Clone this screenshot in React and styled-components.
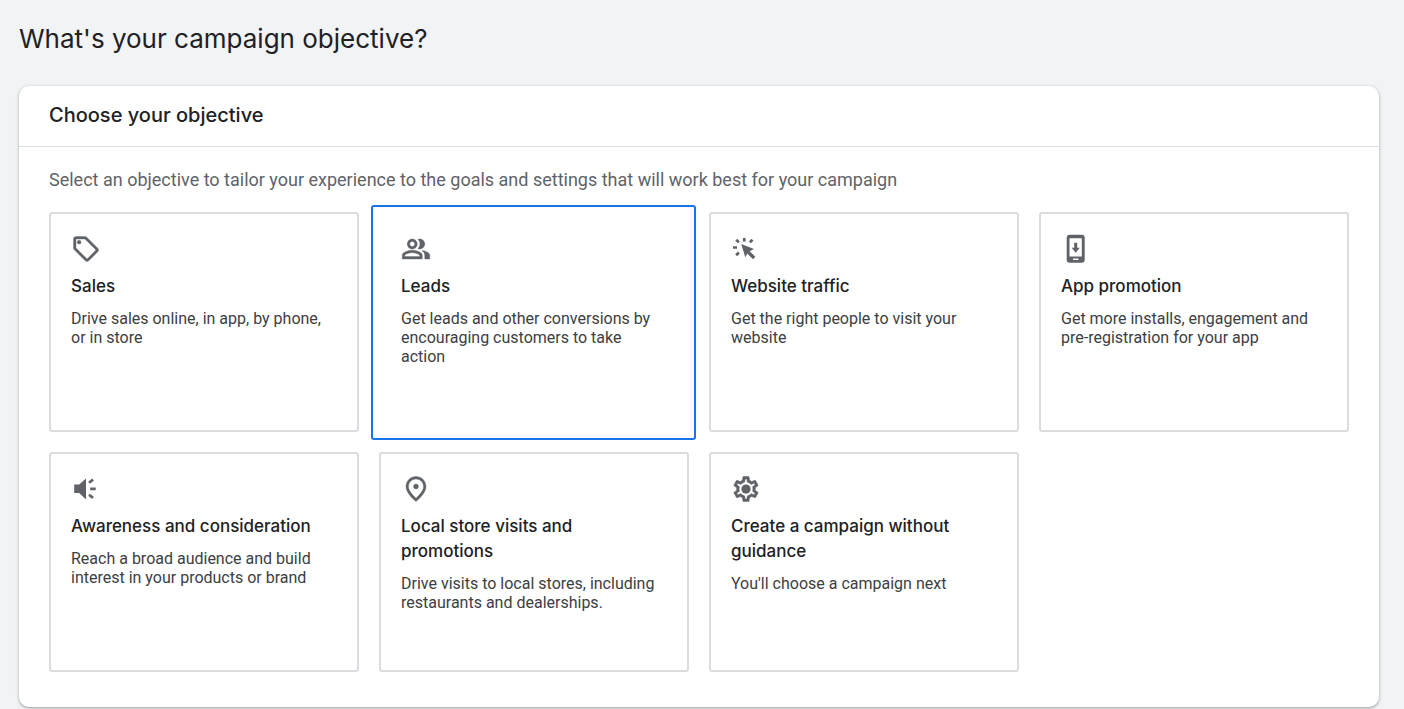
import React, { useState } from 'react'
import styled, { createGlobalStyle } from 'styled-components'
import { MdOutlineSell, MdOutlinePeopleAlt, MdOutlinePlace } from 'react-icons/md'

const GlobalStyle = createGlobalStyle`
  * {
    box-sizing: border-box;
  }

  body {
    margin: 0;
    background: #f1f3f4;
    color: #202124;
    font-family: Roboto, 'Liberation Sans', sans-serif;
  }
`

const displayFont = "'Google Sans', 'Product Sans', Inter, 'Open Sans', sans-serif"

const Page = styled.main`
  padding: 21px 25px 2px 19px;
`

const PageTitle = styled.h1`
  margin: 0 0 29px;
  font-family: ${displayFont};
  font-size: 26px;
  font-weight: 400;
  line-height: 36px;
`

const Panel = styled.section`
  background: #fff;
  border-radius: 10px;
  box-shadow: 0 1px 2px rgba(60, 64, 67, 0.3), 0 1px 3px 1px rgba(60, 64, 67, 0.15);
`

const PanelHeader = styled.header`
  padding: 14px 30px 16px;
  border-bottom: 1px solid #dadce0;
`

const PanelTitle = styled.h2`
  margin: 0;
  font-family: ${displayFont};
  font-size: 20px;
  font-weight: 500;
  line-height: 30px;
`

const PanelBody = styled.div`
  padding: 20px 30px 35px;
`

const Hint = styled.p`
  margin: 0 0 20px;
  color: #5f6368;
  font-size: 18px;
  line-height: 25px;
`

const Grid = styled.div`
  display: grid;
  grid-template-columns: repeat(4, minmax(0, 1fr));
  grid-auto-rows: minmax(220px, auto);
  gap: 20px;
`

const Card = styled.button`
  display: flex;
  flex-direction: column;
  align-items: flex-start;
  margin: ${props => (props.$selected ? '-7px -7px -8px -8px' : '0')};
  padding: ${props => (props.$selected ? '27px 27px 28px 28px' : '20px')};
  background: #fff;
  border: 2px solid ${props => (props.$selected ? '#1a73e8' : '#dadce0')};
  border-radius: 3px;
  color: inherit;
  font-family: inherit;
  text-align: left;
  cursor: pointer;
`

const IconBox = styled.span`
  display: flex;
  margin-bottom: 10px;
  color: #5f6368;

  svg {
    width: 30px;
    height: 30px;
    stroke-width: 0.3;
  }

  /* the material icons carry an empty bounding path */
  [fill='none']:not([stroke]) {
    stroke: none;
  }
`

const CardTitle = styled.span`
  margin-bottom: 10px;
  font-family: ${displayFont};
  font-size: 17px;
  font-weight: 500;
  line-height: 25px;
`

const CardText = styled.span`
  color: #3c4043;
  font-size: 16px;
  line-height: 19px;
`

const TrafficIcon = () => (
  <svg viewBox="0 0 30 30" fill="currentColor" aria-hidden="true">
    <path d="M10.2 10 23 15l-4.3 2.2 5.7 5.6-2.4 2.4-5.7-5.7-2 3.7z" />
    <path
      d="M13.3 4v3.5M5.2 5.7l2.7 2.7M21.5 5.7l-2.7 2.7M2 13.5h4M5.2 21.2l2.7-2.7"
      fill="none"
      stroke="currentColor"
      strokeWidth="2.7"
    />
  </svg>
)

const AppIcon = () => (
  <svg viewBox="0 0 30 30" fill="currentColor" aria-hidden="true">
    <path
      fillRule="evenodd"
      d="M8.7.7h12a3 3 0 0 1 3 3v22a3 3 0 0 1-3 3h-12a3 3 0 0 1-3-3v-22a3 3 0 0 1 3-3zM8.5 4.3v18.3h12.3V4.3zM12 24.6v1.5h5.4v-1.5z"
    />
    <path d="M13.2 8.7h3v5h2.5l-4 5-4-5h2.5z" />
  </svg>
)

const AwarenessIcon = () => (
  <svg viewBox="0 0 30 30" fill="currentColor" aria-hidden="true">
    <path d="M3.2 10.5h5L15 4.5v21L8.2 19h-5z" />
    <path
      d="M19.2 14.8h5.5M18 8.8l4-3.2M18 20.7l4 3.2"
      fill="none"
      stroke="currentColor"
      strokeWidth="2.7"
    />
  </svg>
)

const GearIcon = () => (
  <svg viewBox="0 0 24 24" fill="currentColor" aria-hidden="true">
    <path
      stroke="currentColor"
      strokeWidth="0.4"
      d="M19.43 12.98c.04-.32.07-.64.07-.98 0-.34-.03-.66-.07-.98l2.11-1.65c.19-.15.24-.42.12-.64l-2-3.46c-.09-.16-.26-.25-.44-.25-.06 0-.12.01-.17.03l-2.49 1c-.52-.4-1.08-.73-1.69-.98l-.38-2.65C14.46 2.18 14.25 2 14 2h-4c-.25 0-.46.18-.49.42l-.38 2.65c-.61.25-1.17.59-1.69.98l-2.49-1c-.06-.02-.12-.03-.18-.03-.17 0-.34.09-.43.25l-2 3.46c-.13.22-.07.49.12.64l2.11 1.65c-.04.32-.07.65-.07.98 0 .33.03.66.07.98l-2.11 1.65c-.19.15-.24.42-.12.64l2 3.46c.09.16.26.25.44.25.06 0 .12-.01.17-.03l2.49-1c.52.4 1.08.73 1.69.98l.38 2.65c.03.24.24.42.49.42h4c.25 0 .46-.18.49-.42l.38-2.65c.61-.25 1.17-.59 1.69-.98l2.49 1c.06.02.12.03.18.03.17 0 .34-.09.43-.25l2-3.46c.12-.22.07-.49-.12-.64l-2.11-1.65zm-1.98-1.71c.04.31.05.52.05.73 0 .21-.02.43-.05.73l-.14 1.13.89.7 1.08.84-.7 1.21-1.27-.51-1.04-.42-.9.68c-.43.32-.84.56-1.25.73l-1.06.43-.16 1.13-.2 1.35h-1.4l-.19-1.35-.16-1.13-1.06-.43c-.43-.18-.83-.41-1.23-.71l-.91-.7-1.06.43-1.27.51-.7-1.21 1.08-.84.89-.7-.14-1.13c-.03-.31-.05-.54-.05-.74s.02-.43.05-.73l.14-1.13-.89-.7-1.08-.84.7-1.21 1.27.51 1.04.42.9-.68c.43-.32.84-.56 1.25-.73l1.06-.43.16-1.13.2-1.35h1.39l.19 1.35.16 1.13 1.06.43c.43.18.83.41 1.23.71l.91.7 1.06-.43 1.27-.51.7 1.21-1.07.85-.89.7.14 1.13z"
    />
    <circle cx="12" cy="12" r="3.7" />
  </svg>
)

const objectives = [
  {
    id: 'sales',
    icon: MdOutlineSell,
    title: 'Sales',
    text: 'Drive sales online, in app, by phone, or in store',
  },
  {
    id: 'leads',
    icon: MdOutlinePeopleAlt,
    title: 'Leads',
    text: 'Get leads and other conversions by encouraging customers to take action',
  },
  {
    id: 'traffic',
    icon: TrafficIcon,
    title: 'Website traffic',
    text: 'Get the right people to visit your website',
  },
  {
    id: 'app',
    icon: AppIcon,
    title: 'App promotion',
    text: 'Get more installs, engagement and pre-registration for your app',
  },
  {
    id: 'awareness',
    icon: AwarenessIcon,
    title: 'Awareness and consideration',
    text: 'Reach a broad audience and build interest in your products or brand',
  },
  {
    id: 'local',
    icon: MdOutlinePlace,
    title: 'Local store visits and promotions',
    text: 'Drive visits to local stores, including restaurants and dealerships.',
  },
  {
    id: 'none',
    icon: GearIcon,
    title: 'Create a campaign without guidance',
    text: "You'll choose a campaign next",
  },
]

const ObjectiveCard = ({ objective, selected, onSelect }) => {
  const Icon = objective.icon
  return (
    <Card type="button" $selected={selected} aria-pressed={selected} onClick={() => onSelect(objective.id)}>
      <IconBox>
        <Icon />
      </IconBox>
      <CardTitle>{objective.title}</CardTitle>
      <CardText>{objective.text}</CardText>
    </Card>
  )
}

const App = () => {
  const [selected, setSelected] = useState('leads')

  return (
    <Page>
      <GlobalStyle />
      <PageTitle>{"What's your campaign objective?"}</PageTitle>
      <Panel>
        <PanelHeader>
          <PanelTitle>Choose your objective</PanelTitle>
        </PanelHeader>
        <PanelBody>
          <Hint>
            Select an objective to tailor your experience to the goals and settings that will work best for your
            campaign
          </Hint>
          <Grid>
            {objectives.map(objective => (
              <ObjectiveCard
                key={objective.id}
                objective={objective}
                selected={objective.id === selected}
                onSelect={setSelected}
              />
            ))}
          </Grid>
        </PanelBody>
      </Panel>
    </Page>
  )
}

export default App
